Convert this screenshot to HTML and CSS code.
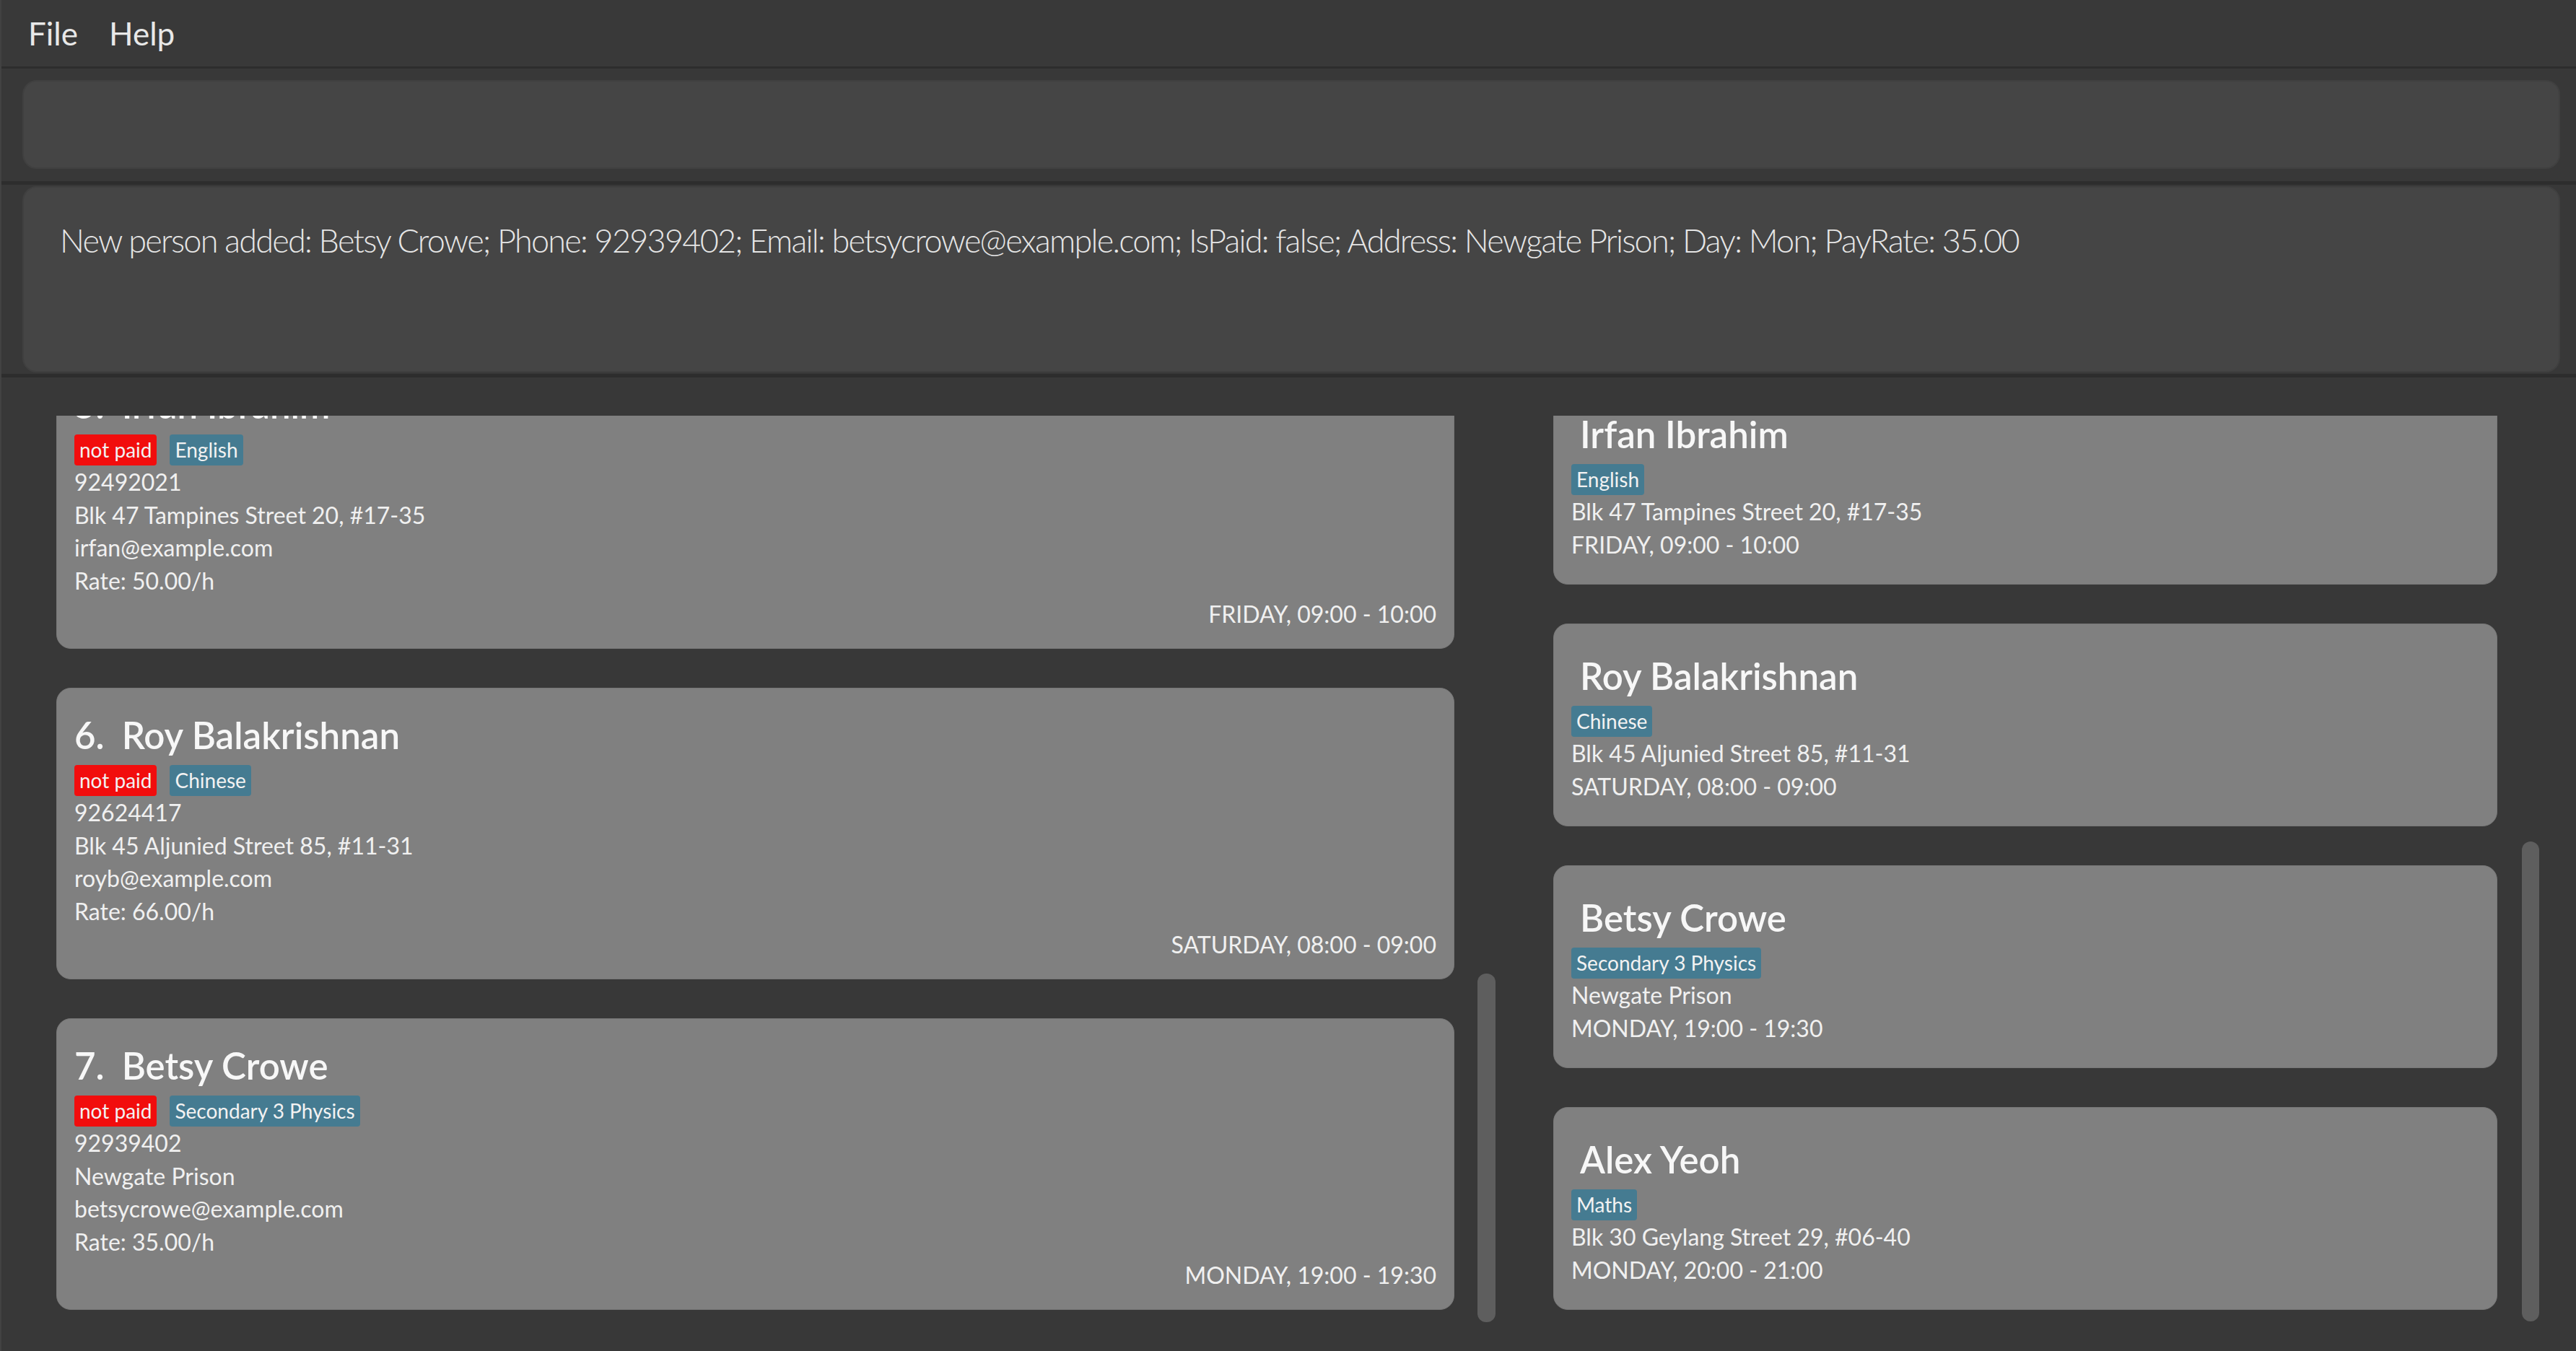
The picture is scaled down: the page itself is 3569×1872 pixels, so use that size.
FILE: index.html
```html
<!DOCTYPE html>
<html lang="en">
<head>
<meta charset="utf-8">
<title>TutorsGo</title>
<link rel="stylesheet" href="styles.css">
</head>
<body>
<div class="menubar">
  <span class="menu-item">File</span>
  <span class="menu-item">Help</span>
</div>
<div class="divider thin"></div>
<div class="command-pane">
  <div class="command-box"></div>
</div>
<div class="divider"></div>
<div class="result-pane">
  <div class="result-box">New person added: Betsy Crowe; Phone: 92939402; Email: betsycrowe@example.com; IsPaid: false; Address: Newgate Prison; Day: Mon; PayRate: 35.00</div>
</div>
<div class="divider"></div>
<div class="lists">
  <div class="viewport left-view">
    <div class="list left-list">
      <div class="card pcard">
        <div class="title"><span class="idx">5.</span><span>Irfan Ibrahim</span></div>
        <div class="tags"><span class="tag unpaid">not paid</span><span class="tag">English</span></div>
        <div class="line">92492021</div>
        <div class="line">Blk 47 Tampines Street 20, #17-35</div>
        <div class="line">irfan@example.com</div>
        <div class="line">Rate: 50.00/h</div>
        <div class="line time">FRIDAY, 09:00 - 10:00</div>
      </div>
      <div class="card pcard">
        <div class="title"><span class="idx">6.</span><span>Roy Balakrishnan</span></div>
        <div class="tags"><span class="tag unpaid">not paid</span><span class="tag">Chinese</span></div>
        <div class="line">92624417</div>
        <div class="line">Blk 45 Aljunied Street 85, #11-31</div>
        <div class="line">royb@example.com</div>
        <div class="line">Rate: 66.00/h</div>
        <div class="line time">SATURDAY, 08:00 - 09:00</div>
      </div>
      <div class="card pcard">
        <div class="title"><span class="idx">7.</span><span>Betsy Crowe</span></div>
        <div class="tags"><span class="tag unpaid">not paid</span><span class="tag">Secondary 3 Physics</span></div>
        <div class="line">92939402</div>
        <div class="line">Newgate Prison</div>
        <div class="line">betsycrowe@example.com</div>
        <div class="line">Rate: 35.00/h</div>
        <div class="line time">MONDAY, 19:00 - 19:30</div>
      </div>
    </div>
  </div>
  <div class="track left-track"><div class="thumb left-thumb"></div></div>
  <div class="viewport right-view">
    <div class="list right-list">
      <div class="card scard">
        <div class="title">Irfan Ibrahim</div>
        <div class="tags"><span class="tag">English</span></div>
        <div class="line">Blk 47 Tampines Street 20, #17-35</div>
        <div class="line">FRIDAY, 09:00 - 10:00</div>
      </div>
      <div class="card scard">
        <div class="title">Roy Balakrishnan</div>
        <div class="tags"><span class="tag">Chinese</span></div>
        <div class="line">Blk 45 Aljunied Street 85, #11-31</div>
        <div class="line">SATURDAY, 08:00 - 09:00</div>
      </div>
      <div class="card scard">
        <div class="title">Betsy Crowe</div>
        <div class="tags"><span class="tag">Secondary 3 Physics</span></div>
        <div class="line">Newgate Prison</div>
        <div class="line">MONDAY, 19:00 - 19:30</div>
      </div>
      <div class="card scard">
        <div class="title">Alex Yeoh</div>
        <div class="tags"><span class="tag">Maths</span></div>
        <div class="line">Blk 30 Geylang Street 29, #06-40</div>
        <div class="line">MONDAY, 20:00 - 21:00</div>
      </div>
    </div>
  </div>
  <div class="track right-track"><div class="thumb right-thumb"></div></div>
</div>
</body>
</html>
```

FILE: styles.css
```css
* { box-sizing: border-box; }
html, body { margin: 0; padding: 0; }
body {
  width: 3569px;
  height: 1872px;
  overflow: hidden;
  background: #383838;
  font-family: Lato, "Open Sans", "Liberation Sans", sans-serif;
  color: #f0f0f0;
  display: flex;
  flex-direction: column;
  border-left: 2px solid #424242;
}
.menubar {
  height: 92px;
  display: flex;
  align-items: center;
  padding-left: 15px;
  background: #393939;
}
.menu-item {
  font-size: 44px;
  line-height: 92px;
  padding: 0 21px 0 22px;
  color: #e8e8e8;
}
.divider { height: 5px; background: #2d2d2d; }
.divider.thin { height: 3px; }
.command-pane { padding: 16px 22px 17px 29px; }
.command-box {
  height: 123px;
  background: #454545;
  border: 2px solid #404040;
  border-radius: 20px;
}
.result-pane { padding: 2px 22px 2px 29px; }
.result-box {
  height: 258px;
  background: #454545;
  border: 2px solid #404040;
  border-radius: 20px;
  padding: 43px 50px;
  font-size: 45px;
  letter-spacing: -1.75px;
  font-weight: 300;
  line-height: 60px;
  color: #e6e6e6;
  white-space: nowrap;
}
.lists {
  flex: 1;
  display: flex;
  padding: 53px 51px 32px 76px;
}
.viewport { overflow: hidden; height: 1264px; }
.left-view { width: 1937px; }
.right-view { width: 1308px; margin-left: 80px; }
.list { display: flex; flex-direction: column; gap: 54px; }
.left-list { margin-top: -81px; }
.right-list { margin-top: -47px; }
.track { width: 25px; margin-left: 32px; }
.right-track { width: 24px; margin-left: 34px; }
.thumb { background: #5e5e5e; border-radius: 12px; }
.left-thumb { margin-top: 773px; height: 483px; }
.right-thumb { margin-top: 590px; height: 665px; }

.card {
  background: #808080;
  border: 1px solid #787878;
  border-radius: 20px;
  flex: none;
}
.pcard { height: 404px; padding: 35px 24px 24px 24px; }
.scard { height: 281px; padding: 42px 24px 24px 24px; }
.title {
  font-size: 51px;
  font-weight: 600;
  line-height: 60px;
  color: #f7f7f7;
  display: flex;
  white-space: nowrap;
}
.idx { margin-right: 24px; }
.scard .title { padding-left: 12px; }
.tags { display: flex; gap: 18px; margin-top: 11px; height: 43px; }
.tag {
  font-size: 28px;
  line-height: 43px;
  padding: 0 7px;
  border-radius: 4px;
  background: #457b91;
  color: #f2f2f2;
}
.tag.unpaid { background: #f20d0d; }
.line {
  font-size: 32px;
  line-height: 45.7px;
  color: #f0f0f0;
  white-space: nowrap;
}
.time { text-align: right; }
.scard .time { text-align: left; }
```
